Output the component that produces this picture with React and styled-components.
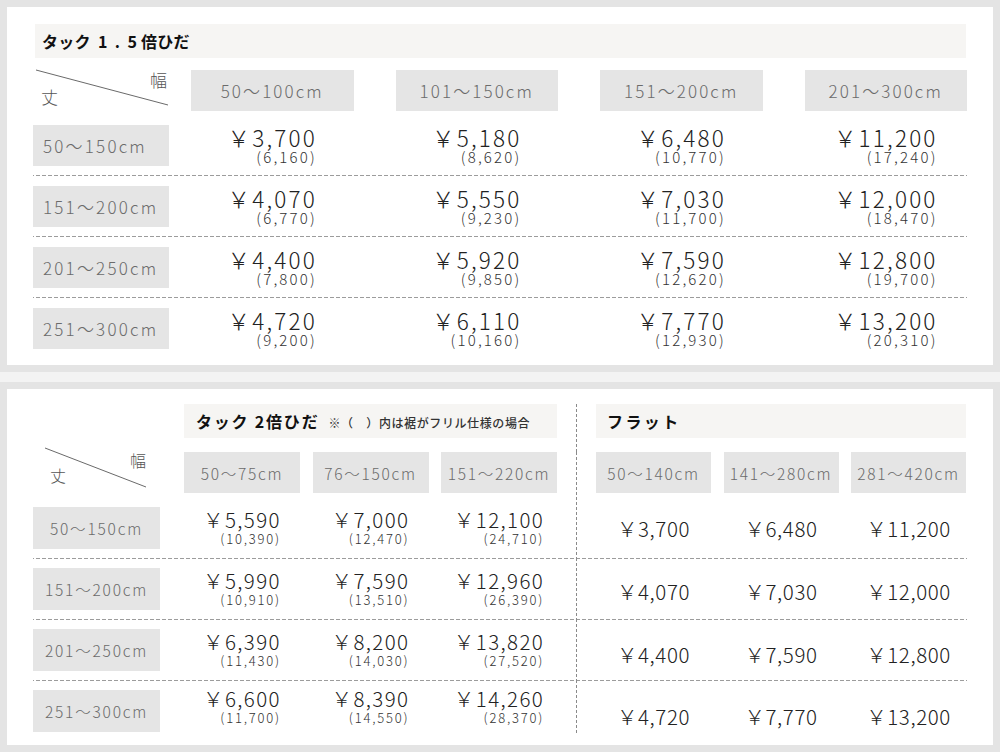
import React from "react";
import styled, { createGlobalStyle } from "styled-components";

// data for both tables
const topCols = ["50〜100cm", "101〜150cm", "151〜200cm", "201〜300cm"];
const rowLabels = ["50〜150cm", "151〜200cm", "201〜250cm", "251〜300cm"];
const topPrices = [
  [["3,700", "6,160"], ["5,180", "8,620"], ["6,480", "10,770"], ["11,200", "17,240"]],
  [["4,070", "6,770"], ["5,550", "9,230"], ["7,030", "11,700"], ["12,000", "18,470"]],
  [["4,400", "7,800"], ["5,920", "9,850"], ["7,590", "12,620"], ["12,800", "19,700"]],
  [["4,720", "9,200"], ["6,110", "10,160"], ["7,770", "12,930"], ["13,200", "20,310"]],
];

const tuckCols = ["50〜75cm", "76〜150cm", "151〜220cm"];
const tuckPrices = [
  [["5,590", "10,390"], ["7,000", "12,470"], ["12,100", "24,710"]],
  [["5,990", "10,910"], ["7,590", "13,510"], ["12,960", "26,390"]],
  [["6,390", "11,430"], ["8,200", "14,030"], ["13,820", "27,520"]],
  [["6,600", "11,700"], ["8,390", "14,550"], ["14,260", "28,370"]],
];
const flatCols = ["50〜140cm", "141〜280cm", "281〜420cm"];
const flatPrices = [
  ["3,700", "6,480", "11,200"],
  ["4,070", "7,030", "12,000"],
  ["4,400", "7,590", "12,800"],
  ["4,720", "7,770", "13,200"],
];
// flat prices sit a little lower row by row
const flatDrop = [0, 4, 8, 18];

const GlobalStyle = createGlobalStyle`
  html, body {
    margin: 0;
    padding: 0;
    background: #f3f3f3;
  }
  body {
    font-family: "Noto Sans CJK JP", sans-serif;
    width: 1000px;
  }
`;

const Page = styled.div`
  width: 1000px;
  display: flex;
  flex-direction: column;
  gap: 10px;
`;

const Panel = styled.section`
  box-sizing: border-box;
  height: ${(p) => p.$h}px;
  background: #fff;
  border: 7px solid #e4e4e4;
  padding: ${(p) => p.$pad};
`;

const TitleBar = styled.div`
  box-sizing: border-box;
  width: ${(p) => (p.$w ? `${p.$w}px` : "auto")};
  flex: none;
  height: 34px;
  margin: ${(p) => p.$m || "0"};
  padding-left: ${(p) => p.$pl}px;
  display: flex;
  align-items: center;
  background: #f6f5f3;
  color: #111;
  font-weight: 700;
  font-size: 16px;
  letter-spacing: ${(p) => p.$ls}px;
  white-space: nowrap;
`;

const Spaced = styled.span`
  letter-spacing: ${(p) => p.$ls}px;
  margin-left: ${(p) => p.$ml || 0}px;
`;

const Note = styled.span`
  font-size: 12px;
  font-weight: 500;
  letter-spacing: 0.6px;
  color: #333;
  margin-left: 9px;
  padding-top: 3px;
`;

const Row = styled.div`
  display: flex;
  align-items: stretch;
  background-image: ${(p) =>
    p.$dashed ? "linear-gradient(to right, #9c9c9c 4px, transparent 4px)" : "none"};
  background-size: 6px 1px;
  background-repeat: repeat-x;
  background-position: 3px 0;
`;

const Diagonal = styled.div`
  position: relative;
  box-sizing: border-box;
  flex: none;
  width: ${(p) => p.$w}px;
  height: ${(p) => p.$h}px;
  margin: ${(p) => p.$m};
  padding: ${(p) => p.$pad};
  display: flex;
  justify-content: space-between;
  font-size: ${(p) => p.$fs}px;
  font-weight: 300;
  line-height: 1;
  color: #555;
  svg {
    position: absolute;
    inset: 0;
    width: 100%;
    height: 100%;
    overflow: visible;
  }
`;

const Tate = styled.span`
  align-self: flex-end;
`;

const Haba = styled.span`
  align-self: flex-start;
`;

const Cells = styled.div`
  box-sizing: border-box;
  display: grid;
  grid-template-columns: repeat(${(p) => p.$n}, ${(p) => p.$cw}px);
  column-gap: ${(p) => p.$gap}px;
  align-items: center;
  margin-left: ${(p) => p.$ml || 0}px;
  padding-top: ${(p) => p.$drop || 0}px;
  flex: none;
`;

const Head = styled.div`
  height: 41px;
  margin-bottom: ${(p) => p.$mb}px;
  display: flex;
  align-items: center;
  justify-content: center;
  background: #e5e5e5;
  color: #6b6b6b;
  font-size: ${(p) => p.$fs}px;
  font-weight: 300;
  letter-spacing: ${(p) => p.$ls}px;
  white-space: nowrap;
`;

const Label = styled.div`
  box-sizing: border-box;
  flex: none;
  width: ${(p) => p.$w}px;
  height: ${(p) => p.$h}px;
  margin: ${(p) => p.$m};
  padding-left: ${(p) => p.$pl || 0}px;
  display: flex;
  align-items: center;
  justify-content: ${(p) => (p.$center ? "center" : "flex-start")};
  background: #e5e5e5;
  color: #6b6b6b;
  font-size: ${(p) => p.$fs}px;
  font-weight: 300;
  letter-spacing: ${(p) => p.$ls}px;
  white-space: nowrap;
`;

const PriceCell = styled.div`
  display: flex;
  justify-content: center;
`;

const PriceBlock = styled.div`
  display: flex;
  flex-direction: column;
  align-items: flex-end;
  white-space: nowrap;
`;

const Main = styled.span`
  font-size: ${(p) => p.$fs}px;
  font-weight: 300;
  line-height: ${(p) => p.$lh}px;
  letter-spacing: ${(p) => p.$ls}px;
  color: #222;
  white-space: nowrap;
`;

const Sub = styled.span`
  font-size: ${(p) => p.$fs}px;
  font-weight: 300;
  line-height: ${(p) => p.$lh}px;
  letter-spacing: ${(p) => p.$ls}px;
  color: #333;
`;

const Divider = styled.div`
  flex: none;
  width: 1px;
  margin: 0 19px;
  background-image: linear-gradient(to bottom, #8a8a8a 3px, transparent 3px);
  background-size: 1px 5px;
  background-repeat: repeat-y;
`;

const Slash = () => (
  <svg preserveAspectRatio="none">
    <line x1="0" y1="0" x2="100%" y2="100%" stroke="#6a6a6a" strokeWidth="1" />
  </svg>
);

function Price({ main, sub, big }) {
  return (
    <PriceCell>
      <PriceBlock>
        <Main $fs={big ? 22.5 : 20.5} $lh={big ? 24 : 23} $ls={big ? 2.2 : 1.4}>
          ￥{main}
        </Main>
        <Sub $fs={big ? 15 : 13} $lh={16} $ls={big ? 2.2 : 1.8}>
          ({sub})
        </Sub>
      </PriceBlock>
    </PriceCell>
  );
}

function TopTable() {
  return (
    <Panel $h={372} $pad="17px 26px 0">
      <TitleBar $pl={7} $ls={0.3} $m="0 1px 12px 2px">
        タック <Spaced $ls={7.5} $ml={7}>1.</Spaced>
        <Spaced $ls={4}>5</Spaced>倍ひだ
      </TitleBar>

      <Row>
        <Diagonal $w={132} $h={35} $m="0 0 3px 3px" $pad="1px 1px 0 5px" $fs={17}>
          <Slash />
          <Tate>丈</Tate>
          <Haba>幅</Haba>
        </Diagonal>
        <Cells $n={4} $cw={162.5} $gap={42} $ml={23}>
          {topCols.map((c) => (
            <Head key={c} $fs={17} $ls={2.1} $mb={3}>
              {c}
            </Head>
          ))}
        </Cells>
      </Row>

      {rowLabels.map((label, i) => (
        <Row key={label} $dashed={i > 0}>
          <Label $w={136} $h={41} $m="11px 0 9px" $pl={10} $fs={17} $ls={2.2}>
            {label}
          </Label>
          <Cells $n={4} $cw={162.5} $gap={42} $ml={22}>
            {topPrices[i].map(([m, s], j) => (
              <Price key={j} main={m} sub={s} big />
            ))}
          </Cells>
        </Row>
      ))}
    </Panel>
  );
}

function BottomTable() {
  return (
    <Panel $h={370} $pad="15px 26px 0">
      <Row>
        <TitleBar $w={373} $pl={12} $ls={1.8} $m="0 0 14px 151px">
          タック 2倍ひだ<Note>※（　）内は裾がフリル仕様の場合</Note>
        </TitleBar>
        <Divider />
        <TitleBar $w={370} $pl={11} $ls={2.4} $m="0 0 14px 0">
          フラット
        </TitleBar>
      </Row>

      <Row>
        <Diagonal $w={101} $h={39} $m="-4px 0 0 12px" $pad="4px 0 4px 5px" $fs={16}>
          <Slash />
          <Tate>丈</Tate>
          <Haba>幅</Haba>
        </Diagonal>
        <Cells $n={3} $cw={116} $gap={12.5} $ml={38}>
          {tuckCols.map((c) => (
            <Head key={c} $fs={15.5} $ls={1.7} $mb={4}>
              {c}
            </Head>
          ))}
        </Cells>
        <Divider />
        <Cells $n={3} $cw={115} $gap={12.5}>
          {flatCols.map((c) => (
            <Head key={c} $fs={15.5} $ls={1.7} $mb={4}>
              {c}
            </Head>
          ))}
        </Cells>
      </Row>

      {rowLabels.map((label, i) => (
        <Row key={label} $dashed={i > 0}>
          <Label
            $w={127}
            $h={42}
            $m={i === 3 ? "10px 0 1px" : "10px 0 9px"}
            $center
            $fs={15.5}
            $ls={1.8}
          >
            {label}
          </Label>
          <Cells $n={3} $cw={116} $gap={12.5} $ml={24}>
            {tuckPrices[i].map(([m, s], j) => (
              <Price key={j} main={m} sub={s} />
            ))}
          </Cells>
          <Divider />
          <Cells $n={3} $cw={115} $gap={12.5} $drop={flatDrop[i]}>
            {flatPrices[i].map((m) => (
              <PriceCell key={m}>
                <Main $fs={20.5} $lh={24} $ls={0.6}>
                  ￥{m}
                </Main>
              </PriceCell>
            ))}
          </Cells>
        </Row>
      ))}
    </Panel>
  );
}

export default function App() {
  return (
    <>
      <GlobalStyle />
      <Page>
        <TopTable />
        <BottomTable />
      </Page>
    </>
  );
}
